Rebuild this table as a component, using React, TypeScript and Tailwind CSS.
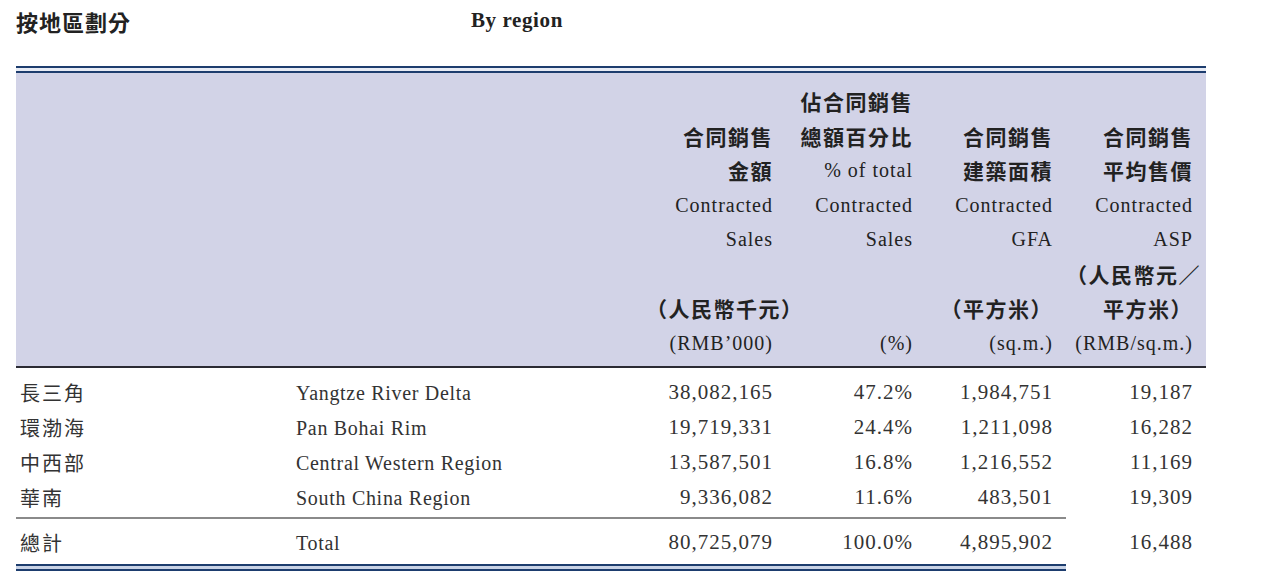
const serif = "font-['Liberation_Serif','Noto_Sans_CJK_TC',serif]";
const cjk = "font-['Noto_Sans_CJK_TC','Noto_Sans_CJK_SC',sans-serif]";

type Line = { t: string; zh?: boolean };

const header: Line[][] = [
  [
    { t: "" },
    { t: "合同銷售", zh: true },
    { t: "金額", zh: true },
    { t: "Contracted" },
    { t: "Sales" },
    { t: "" },
    { t: "（人民幣千元）", zh: true },
    { t: "(RMB’000)" },
  ],
  [
    { t: "佔合同銷售", zh: true },
    { t: "總額百分比", zh: true },
    { t: "% of total" },
    { t: "Contracted" },
    { t: "Sales" },
    { t: "" },
    { t: "" },
    { t: "(%)" },
  ],
  [
    { t: "" },
    { t: "合同銷售", zh: true },
    { t: "建築面積", zh: true },
    { t: "Contracted" },
    { t: "GFA" },
    { t: "" },
    { t: "（平方米）", zh: true },
    { t: "(sq.m.)" },
  ],
  [
    { t: "" },
    { t: "合同銷售", zh: true },
    { t: "平均售價", zh: true },
    { t: "Contracted" },
    { t: "ASP" },
    { t: "（人民幣元／", zh: true },
    { t: "平方米）", zh: true },
    { t: "(RMB/sq.m.)" },
  ],
];

const rows = [
  ["長三角", "Yangtze River Delta", "38,082,165", "47.2%", "1,984,751", "19,187"],
  ["環渤海", "Pan Bohai Rim", "19,719,331", "24.4%", "1,211,098", "16,282"],
  ["中西部", "Central Western Region", "13,587,501", "16.8%", "1,216,552", "11,169"],
  ["華南", "South China Region", "9,336,082", "11.6%", "483,501", "19,309"],
];

const total = ["總計", "Total", "80,725,079", "100.0%", "4,895,902", "16,488"];

const cols = "grid grid-cols-[266px_364px_140px_140px_140px_140px]";

function DataRow({ r }: { r: string[] }) {
  return (
    <div className={`${cols} h-[35px] items-center text-[#333]`}>
      <div className={`${cjk} pl-[4px] text-[20px] tracking-[2px]`}>{r[0]}</div>
      <div className={`${serif} pl-[14px] text-[20px] tracking-[0.7px]`}>{r[1]}</div>
      {r.slice(2).map((v, i) => (
        <div key={i} className={`${serif} pr-[13px] text-right text-[21px] tracking-[1px]`}>
          {v}
        </div>
      ))}
    </div>
  );
}

export default function App() {
  return (
    <div className="w-[1264px] h-[578px] bg-white overflow-hidden">
      {/* title */}
      <div className="flex items-center h-[42px] text-[#222]">
        <div className={`${cjk} pl-[16px] w-[471px] text-[22px] font-bold tracking-[1px]`}>
          按地區劃分
        </div>
        <div className={`${serif} text-[21px] font-bold tracking-[0.6px]`}>By region</div>
      </div>

      <div className="ml-[16px] mt-[24px] w-[1190px]">
        {/* top double rule */}
        <div className="h-[7px] border-y-2 border-[#1d3d6e] bg-[#e8ecf5]" />

        {/* header */}
        <div className={`${cols} bg-[#d2d3e7] pt-[11px] pb-[6px] border-b-2 border-[#2b2b33] text-[#222]`}>
          <div />
          <div />
          {header.map((col, ci) => (
            <div key={ci} className="flex flex-col pr-[13px]">
              {col.map((l, li) => (
                <div
                  key={li}
                  className={`h-[34.5px] leading-[34.5px] text-right whitespace-nowrap ${
                    l.zh
                      ? `${cjk} text-[21px] font-bold tracking-[1.5px]`
                      : `${serif} text-[20px] tracking-[1px]`
                  }`}
                >
                  {l.t}
                </div>
              ))}
            </div>
          ))}
        </div>

        {/* body */}
        <div className="pt-[7px] pb-[2px]">
          {rows.map((r, i) => (
            <DataRow key={i} r={r} />
          ))}
        </div>
        <div className="w-[1050px] h-[2px] bg-[#8a8a8a]" />
        <div className="pt-[6px] pb-[4px]">
          <DataRow r={total} />
        </div>
        <div className="w-[1050px] h-[7px] border-y-2 border-[#1d3d6e] bg-[#c9d3e6]" />
      </div>
    </div>
  );
}
